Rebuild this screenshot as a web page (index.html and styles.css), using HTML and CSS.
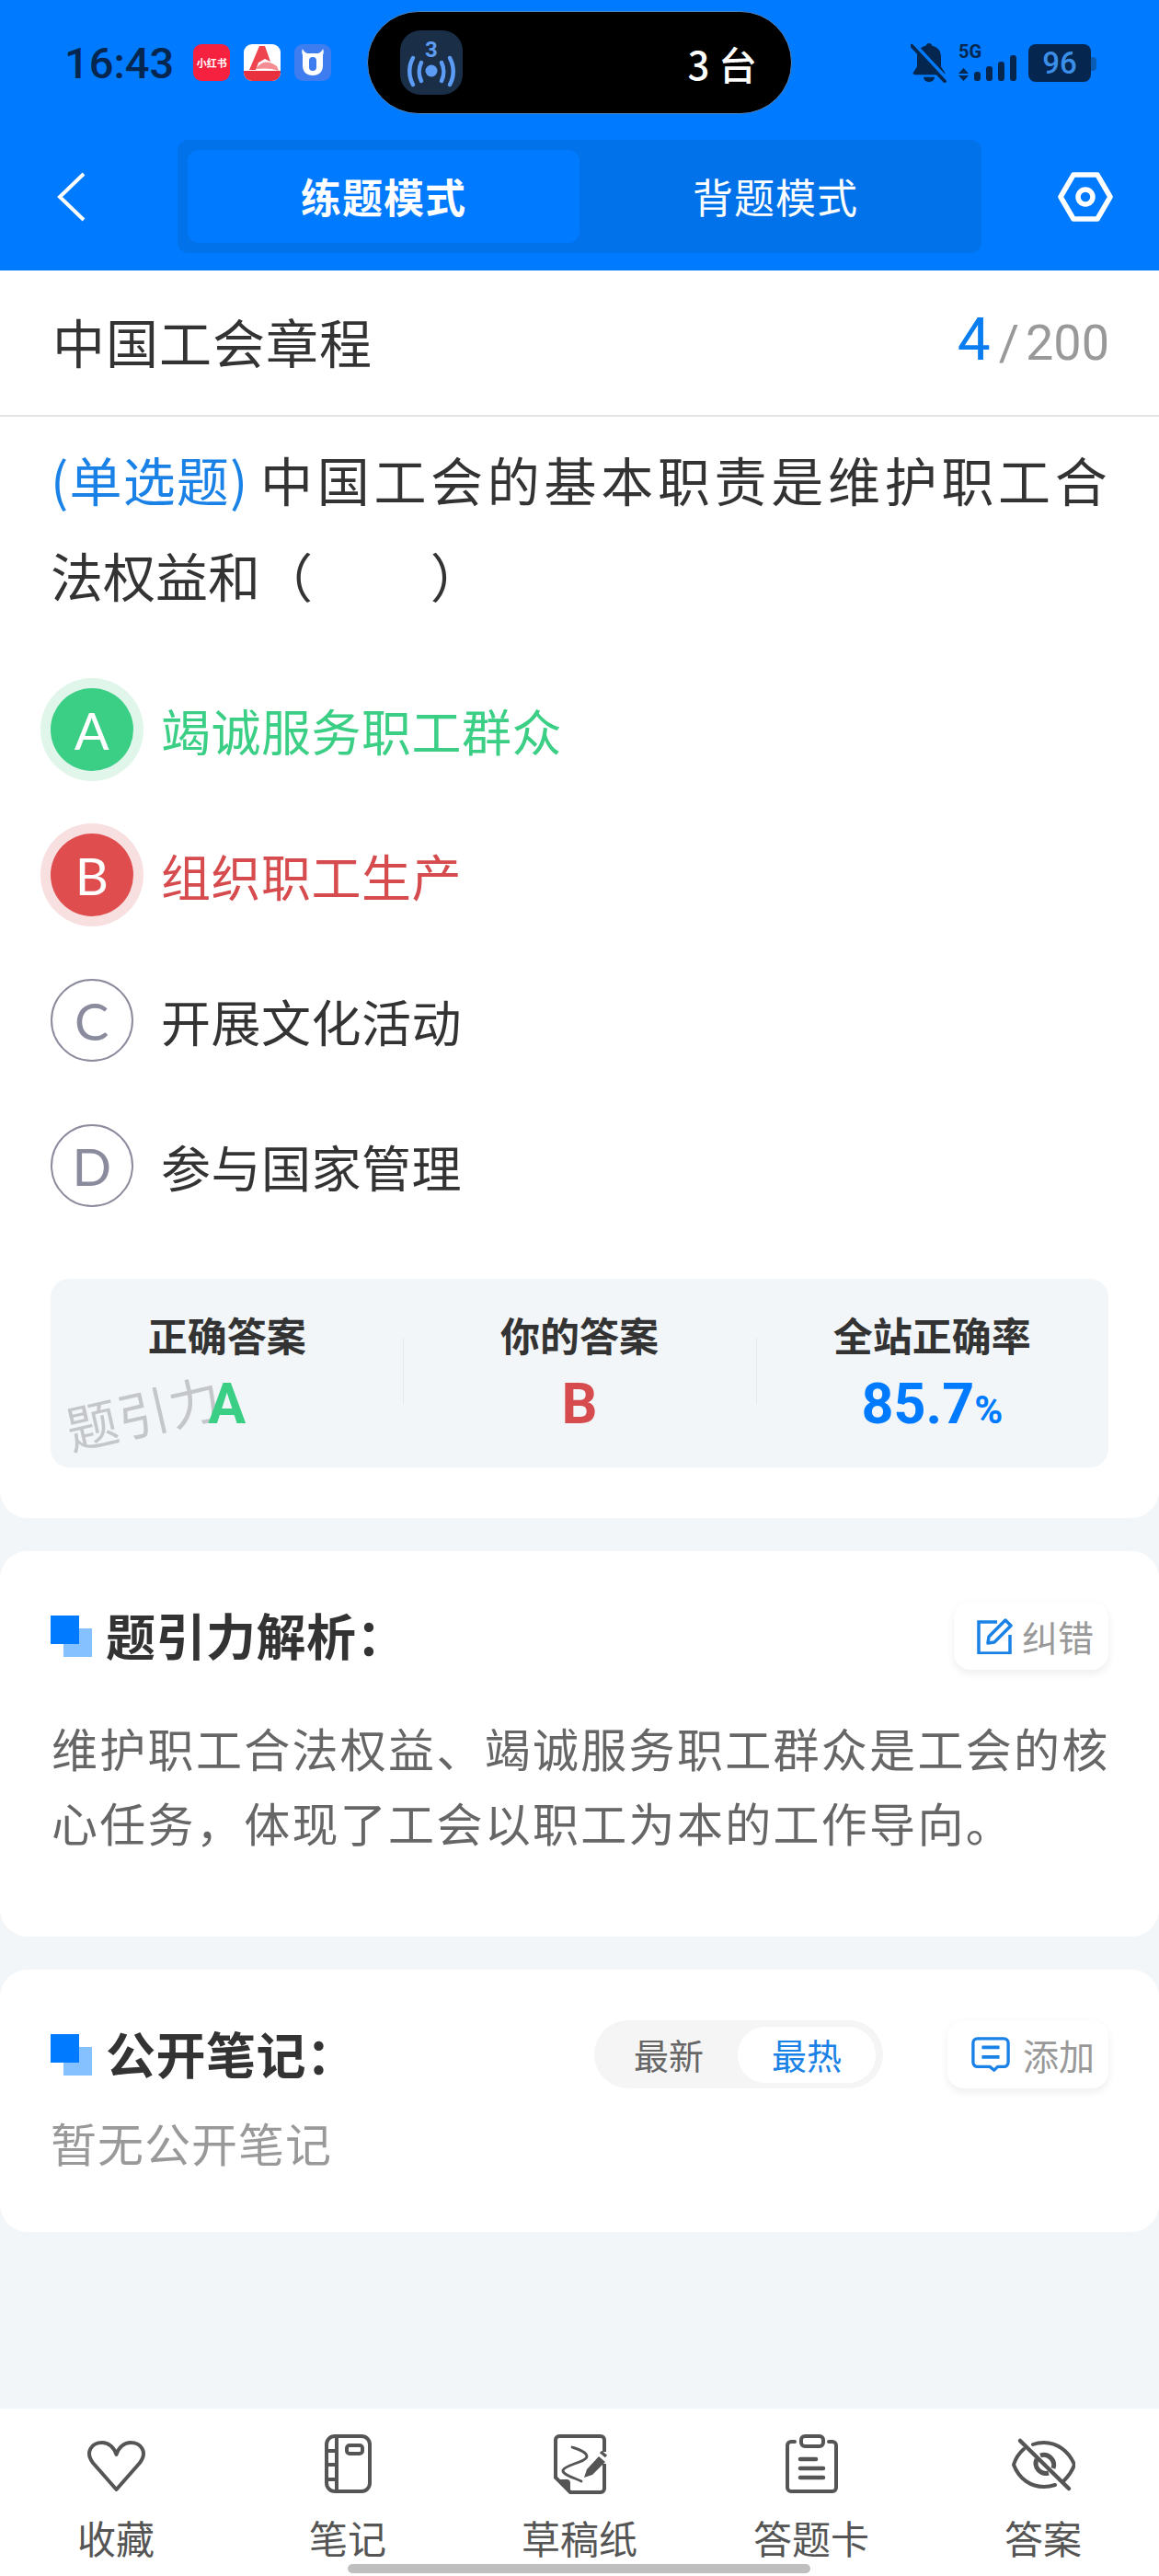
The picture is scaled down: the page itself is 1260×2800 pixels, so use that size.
FILE: index.html
```html
<!DOCTYPE html>
<html lang="zh-CN">
<head>
    <meta charset="UTF-8">
    <meta name="viewport" content="width=device-width, initial-scale=1.0">
    <title>练题模式</title>
    <link rel="stylesheet" href="styles.css">
</head>
<body>
    <header class="top">
        <div class="status">
            <div class="status-left">
                <span class="time">16:43</span>
                <span class="app app-red">小红书</span>
                <span class="app app-white">
                    <svg viewBox="0 0 40 40" width="40" height="40">
                        <rect width="40" height="40" fill="#fff"/>
                        <path d="M0 29h40v11H0z" fill="#e8303f"/>
                        <path d="M6 28 17 2h6l6 17-6-3-7 4-3 8z" fill="#ee4450"/>
                        <path d="M13 27c6-9 14-10 23-3l2 5c-8-3-16-3-25-2z" fill="#f58d92"/>
                    </svg>
                </span>
                <span class="app app-blue">
                    <svg viewBox="0 0 40 40" width="40" height="40">
                        <path d="M9 12c-1-3-1-5 0-7 1 3 3 4 5 5h12c2-1 4-2 5-5 1 2 1 4 0 7v11c0 7-4 11-11 11S9 30 9 23z" fill="#fff"/>
                        <rect x="16" y="14" width="8" height="15" rx="4" fill="#3d7df0"/>
                    </svg>
                </span>
            </div>
            <div class="island">
                <span class="island-icon">
                    <svg viewBox="0 0 68 70" width="68" height="70">
                        <text x="34" y="29" class="island-num">3</text>
                        <circle cx="34" cy="44" r="6.500" fill="#5c9cf5"/>
                        <g fill="none" stroke="#5c9cf5" stroke-width="4.500" stroke-linecap="round">
                            <path d="M23 35c-3 6-3 14 0 20M45 35c3 6 3 14 0 20"/>
                            <path d="M14 30c-5 9-5 20 0 29M54 30c5 9 5 20 0 29"/>
                        </g>
                    </svg>
                </span>
                <span class="island-text">3 台</span>
            </div>
            <div class="status-right">
                <svg viewBox="0 0 40 50" width="40" height="44" preserveAspectRatio="none">
                    <path d="M20 1c2 0 3 1 3 3 7 2 10 7 10 14v12l4 7c1 2 0 3-2 3H5c-2 0-3-1-2-3l4-7V18c0-7 3-12 10-14 0-2 1-3 3-3z" fill="#04264f"/>
                    <path d="M14 43h12a6 6 0 0 1-12 0z" fill="#04264f"/>
                    <path d="M3 3 39 47" stroke="#007aff" stroke-width="7"/>
                    <path d="M1 4 37 48" stroke="#04264f" stroke-width="4" stroke-linecap="round"/>
                </svg>
                <div class="signal">
                    <span class="net">5G</span>
                    <svg viewBox="0 0 64 44" width="64" height="44">
                        <path d="M0 34 5.500 28 11 34zM0 36 5.500 42 11 36z" fill="#04264f"/>
                        <rect x="17" y="32" width="7" height="10" rx="3" fill="#04264f"/>
                        <rect x="30" y="26" width="7" height="16" rx="3" fill="#04264f"/>
                        <rect x="43" y="21" width="7" height="21" rx="3" fill="#04264f"/>
                        <rect x="56" y="14" width="7" height="28" rx="3" fill="#04264f"/>
                    </svg>
                </div>
                <span class="battery">96</span>
            </div>
        </div>
        <div class="nav">
            <svg class="back" viewBox="0 0 32 54" width="32" height="54">
                <path d="M30 2 4 27l26 25" fill="none" stroke="#fff" stroke-width="4"/>
            </svg>
            <div class="mode">
                <span class="mode-item mode-on">练题模式</span>
                <span class="mode-item">背题模式</span>
            </div>
            <svg class="gear" viewBox="0 0 60 54" width="60" height="54">
                <path d="M17 3h26l14 24-14 24H17L3 27z" fill="none" stroke="#fff" stroke-width="5.500" stroke-linejoin="round"/>
                <circle cx="30" cy="27" r="8" fill="none" stroke="#fff" stroke-width="5.500"/>
            </svg>
        </div>
    </header>

    <section class="card card-main">
        <div class="paper">
            <span class="paper-name">中国工会章程</span>
            <span class="paper-count"><b>4</b><i>/</i>200</span>
        </div>
        <p class="question"><span class="qtype">(单选题)</span> 中国工会的基本职责是维护职工合<br>法权益和（&nbsp;&nbsp;&nbsp;&nbsp;&nbsp;&nbsp;&nbsp;&nbsp;&nbsp;&nbsp;）</p>
        <ul class="options">
            <li class="option option-right"><span class="letter">A</span>竭诚服务职工群众</li>
            <li class="option option-wrong"><span class="letter">B</span>组织职工生产</li>
            <li class="option"><span class="letter">C</span>开展文化活动</li>
            <li class="option"><span class="letter">D</span>参与国家管理</li>
        </ul>
        <div class="result">
            <span class="watermark">题引力</span>
            <div class="result-col">
                <span class="result-label">正确答案</span>
                <span class="result-val green">A</span>
            </div>
            <div class="result-col">
                <span class="result-label">你的答案</span>
                <span class="result-val red">B</span>
            </div>
            <div class="result-col">
                <span class="result-label">全站正确率</span>
                <span class="result-val blue">85.7<small>%</small></span>
            </div>
        </div>
    </section>

    <section class="card card-analysis">
        <div class="card-head">
            <span class="squares"></span>
            <h2>题引力解析：</h2>
            <span class="tool">
                <svg viewBox="0 0 40 40" width="40" height="40">
                    <path d="M22 5H2v34h34V19" fill="none" stroke="#1a82e6" stroke-width="3.500"/>
                    <path d="M13 21 31 3l6 6-18 18-7 1z" fill="none" stroke="#1a82e6" stroke-width="3.500" stroke-linejoin="round"/>
                </svg>
                纠错
            </span>
        </div>
        <p class="analysis">维护职工合法权益、竭诚服务职工群众是工会的核心任务，体现了工会以职工为本的工作导向。</p>
    </section>

    <section class="card card-notes">
        <div class="card-head">
            <span class="squares"></span>
            <h2>公开笔记：</h2>
            <div class="sort">
                <span class="sort-item">最新</span>
                <span class="sort-item sort-on">最热</span>
            </div>
            <span class="tool tool-add">
                <svg viewBox="0 0 44 40" width="42" height="40">
                    <path d="M7 2h30a5 5 0 0 1 5 5v22a5 5 0 0 1-5 5H30l-4 4-5-4H7a5 5 0 0 1-5-5V7a5 5 0 0 1 5-5z" fill="none" stroke="#1a82e6" stroke-width="3.500" stroke-linejoin="round"/>
                    <path d="M12 12h20M12 23h20" stroke="#1a82e6" stroke-width="4"/>
                </svg>
                添加
            </span>
        </div>
        <p class="empty">暂无公开笔记</p>
    </section>

    <nav class="tabbar">
        <div class="tab">
            <svg viewBox="0 0 66 66" width="66" height="66">
                <path d="M33.500 61 8 32C-1 20 7 10 18 10c7 0 13 5 15.500 13C36 15 42 10 49 10c11 0 19 10 10 22z" fill="none" stroke="#555" stroke-width="4" stroke-linejoin="round"/>
            </svg>
            收藏
        </div>
        <div class="tab">
            <svg viewBox="0 0 66 66" width="66" height="66">
                <rect x="10" y="3" width="47" height="60" rx="9" fill="none" stroke="#555" stroke-width="4"/>
                <path d="M21 3v60M10 19h11M10 34h11M10 50h11" fill="none" stroke="#555" stroke-width="4"/>
                <rect x="32" y="13" width="17" height="9" rx="3" fill="none" stroke="#555" stroke-width="4"/>
            </svg>
            笔记
        </div>
        <div class="tab">
            <svg viewBox="0 0 66 66" width="66" height="66">
                <path d="M60 20V7a4 4 0 0 0-4-4H11a4 4 0 0 0-4 4v41l16 16h33a4 4 0 0 0 4-4V33" fill="none" stroke="#555" stroke-width="4"/>
                <path d="M8 50h11q4 0 4 4v9z" fill="#555"/>
                <path d="M25 15c6 2 16 5 16 10 0 6-24 9-26 15-1 5 12 8 20 12" fill="none" stroke="#555" stroke-width="2.800" stroke-linecap="round"/>
                <path d="M38 48l3-9 13-14 7 6-14 14z" fill="#555"/>
                <path d="M56 20l6 5" stroke="#555" stroke-width="3.500"/>
            </svg>
            草稿纸
        </div>
        <div class="tab">
            <svg viewBox="0 0 66 66" width="66" height="66">
                <path d="M15 9H11a4 4 0 0 0-4 4v46a4 4 0 0 0 4 4h45a4 4 0 0 0 4-4V13a4 4 0 0 0-4-4h-4" fill="none" stroke="#555" stroke-width="4" stroke-linecap="round"/>
                <rect x="22" y="3" width="24" height="11" rx="4" fill="none" stroke="#555" stroke-width="4"/>
                <path d="M21 28h17M21 38h25M21 48h25" stroke="#555" stroke-width="4.500" stroke-linecap="round"/>
            </svg>
            答题卡
        </div>
        <div class="tab">
            <svg viewBox="0 0 70 66" width="70" height="66">
                <path d="M14 17Q6 24 3 34c6 16 19 24 33 24 4 0 8-.7 12-2M24 12c4-1.500 8-2 12-2 14 0 27 9 33 24-2 6-6 12-11 17" fill="none" stroke="#555" stroke-width="4" stroke-linecap="round"/>
                <path d="M10 8 63 60" stroke="#555" stroke-width="4.500" stroke-linecap="round"/>
                <path d="M28 28a11 11 0 0 0 13 15M32 24a11 11 0 0 1 14 14" fill="none" stroke="#555" stroke-width="5"/>
            </svg>
            答案
        </div>
        <span class="home-bar"></span>
    </nav>
</body>
</html>
```

FILE: styles.css
```css
* {
    box-sizing: border-box;
}
body {
    margin: 0;
    height: 2800px;
    position: relative;
    overflow: hidden;
    background-color: #f2f6f9;
    font-family: "Noto Sans CJK SC", "Noto Sans", sans-serif;
    color: #333;
}

/* header */
.top {
    height: 294px;
    background-color: #007aff;
}
.status {
    height: 124px;
    padding: 12px 0 0 70px;
    display: flex;
    align-items: flex-start;
}
.status-left {
    width: 329px;
    height: 112px;
    display: flex;
    align-items: center;
    gap: 15px;
    font-family: Roboto, sans-serif;
}
.time {
    font-size: 47px;
    font-weight: 500;
    color: #04264f;
    margin-right: 6px;
}
.app {
    width: 40px;
    height: 40px;
    border-radius: 9px;
    overflow: hidden;
    display: flex;
    align-items: center;
    justify-content: center;
}
.app-red {
    background-color: #f5213f;
    color: #fff;
    font-size: 11px;
    font-weight: 700;
    font-family: "Noto Sans CJK SC", sans-serif;
    white-space: nowrap;
}
.app-blue {
    background-color: #3d7df0;
}
.island {
    width: 462px;
    height: 112px;
    background-color: #000;
    border-radius: 56px;
    display: flex;
    align-items: center;
    justify-content: space-between;
    padding: 0 37px 0 35px;
    border: 1px solid #4b85c4;
}
.island-icon {
    width: 68px;
    height: 70px;
    border-radius: 22px;
    background-color: #1a2e47;
}
.island-num {
    fill: #5c9cf5;
    font-size: 24px;
    font-weight: 700;
    text-anchor: middle;
    font-family: Roboto, sans-serif;
}
.island-text {
    color: #fff;
    font-size: 42px;
    font-weight: 500;
}
.status-right {
    margin-left: 129px;
    height: 112px;
    display: flex;
    align-items: center;
    gap: 12px;
}
.signal {
    position: relative;
    width: 64px;
    height: 44px;
}
.net {
    position: absolute;
    left: 0;
    top: 0;
    font-family: Roboto, sans-serif;
    font-size: 20px;
    font-weight: 700;
    line-height: 20px;
    color: #04264f;
}
.battery {
    position: relative;
    width: 68px;
    height: 41px;
    border-radius: 8px;
    background-color: #04264f;
    color: #3c8fe8;
    font-family: Roboto, sans-serif;
    font-size: 33px;
    font-weight: 500;
    line-height: 41px;
    text-align: center;
}
.battery::after {
    content: "";
    position: absolute;
    right: -6px;
    top: 14px;
    width: 6px;
    height: 15px;
    border-radius: 0 4px 4px 0;
    background-color: #0a5db5;
}
.nav {
    height: 123px;
    margin-top: 28px;
    display: flex;
    align-items: center;
    padding: 0 0 0 61px;
}
.mode {
    width: 874px;
    height: 123px;
    margin: 0 0 0 100px;
    padding: 11px 11px;
    border-radius: 12px;
    background-color: #0172e9;
    display: flex;
}
.mode-item {
    flex: 1;
    border-radius: 12px;
    color: #fff;
    font-size: 44px;
    line-height: 100px;
    text-align: center;
    letter-spacing: 1px;
}
.mode-on {
    background-color: #007aff;
    font-weight: 700;
}
.gear {
    margin-left: 83px;
}

/* question card */
.card {
    background-color: #fff;
    border-radius: 30px;
}
.card-main {
    height: 1356px;
    padding: 0 55px;
    border-radius: 0 0 30px 30px;
    margin-bottom: 36px;
}
.paper {
    height: 159px;
    margin: 0 -55px;
    padding: 0 54px 6px 57px;
    display: flex;
    align-items: center;
    justify-content: space-between;
    border-bottom: 2px solid #e4e4e4;
}
.paper-name {
    font-size: 57px;
    letter-spacing: 1px;
}
.paper-count {
    font-family: Roboto, sans-serif;
    font-size: 54px;
    color: #999;
}
.paper-count b {
    font-weight: 400;
    font-size: 64px;
    color: #0a7ef0;
}
.paper-count i {
    font-style: normal;
    margin: 0 7px 0 9px;
}
.question {
    margin: 0;
    padding: 15px 0 0 0;
    font-size: 57px;
    line-height: 104px;
    height: 261px;
    white-space: nowrap;
}
.question::first-line {
    letter-spacing: 4.700px;
}
.qtype {
    color: #1a82e6;
    letter-spacing: 1.200px;
    margin-right: -5px;
}
.options {
    list-style: none;
    margin: 0;
    padding: 0;
}
.option {
    height: 158px;
    display: flex;
    align-items: center;
    gap: 30px;
    font-size: 54px;
    letter-spacing: 0.5px;
}
.letter {
    width: 90px;
    height: 90px;
    border-radius: 50%;
    border: 2px solid #8b8b9e;
    color: #8b8b9e;
    font-family: Lato, sans-serif;
    font-size: 56px;
    display: flex;
    align-items: center;
    justify-content: center;
}
.option-right {
    color: #3bce85;
}
.option-right .letter {
    background-color: #3bce85;
    border: 0;
    color: #fff;
    box-shadow: 0 0 0 11px #e0f6ea;
}
.option-wrong {
    color: #d64b4d;
}
.option-wrong .letter {
    background-color: #e04d4f;
    border: 0;
    color: #fff;
    box-shadow: 0 0 0 11px #f9e0e0;
}
.result {
    position: relative;
    height: 205px;
    margin-top: 44px;
    border-radius: 20px;
    background-color: #f2f6f9;
    display: flex;
}
.result-col {
    flex: 1;
    display: flex;
    flex-direction: column;
    align-items: center;
    padding-top: 32px;
    position: relative;
}
.result-col + .result-col::before {
    content: "";
    position: absolute;
    left: 0;
    top: 64px;
    height: 72px;
    width: 1px;
    background-color: #e6e9ec;
}
.result-label {
    font-size: 43px;
    font-weight: 700;
    line-height: 56px;
}
.result-val {
    font-family: Roboto, sans-serif;
    font-size: 61px;
    font-weight: 700;
    line-height: 66px;
    margin-top: 15px;
}
.result-val small {
    font-size: 42px;
}
.green {
    color: #3bce85;
}
.red {
    color: #d64b4d;
}
.blue {
    color: #007aff;
}
.watermark {
    position: absolute;
    left: 15px;
    top: 103px;
    font-size: 56px;
    color: #c4c6c9;
    transform: rotate(-13deg);
    letter-spacing: 1px;
}

/* analysis + notes */
.card-analysis {
    height: 419px;
    margin-bottom: 36px;
    padding: 55px 45px 0 55px;
}
.card-analysis .tool {
    margin-right: 10px;
}
.card-notes {
    height: 285px;
    padding: 55px 55px 0;
}
.card-head {
    height: 74px;
    display: flex;
    align-items: center;
}
.squares {
    width: 45px;
    height: 45px;
    position: relative;
    margin-right: 15px;
    flex-shrink: 0;
}
.squares::before,
.squares::after {
    content: "";
    position: absolute;
    width: 31px;
    height: 31px;
}
.squares::before {
    right: 0;
    bottom: 0;
    background-color: #85c1ff;
}
.squares::after {
    left: 0;
    top: 0;
    background-color: #007aff;
}
h2 {
    margin: -4px 0 0;
    font-size: 54px;
    font-weight: 700;
    letter-spacing: 0.5px;
    flex: 1;
}
.tool {
    height: 74px;
    padding: 0 16px 0 25px;
    border-radius: 18px;
    background-color: #fff;
    box-shadow: 0 4px 10px rgba(0, 0, 0, 0.07);
    display: flex;
    align-items: center;
    gap: 9px;
    font-size: 39px;
    color: #999;
}
.tool-add {
    padding: 0 15px 0 26px;
    gap: 14px;
}
.analysis {
    margin: 44px 0 0;
    padding-left: 1px;
    font-size: 50px;
    line-height: 81px;
    letter-spacing: 2.300px;
    color: #666;
}
.sort {
    width: 314px;
    height: 74px;
    padding: 7px 8px 6px 6px;
    margin-right: 70px;
    border-radius: 37px;
    background-color: #f5f5f5;
    display: flex;
}
.sort-item {
    flex: 1;
    border-radius: 30px;
    font-size: 38px;
    line-height: 60px;
    text-align: center;
    color: #666;
}
.sort-on {
    background-color: #fff;
    color: #1a82e6;
}
.empty {
    margin: 22px 0 0;
    font-size: 50px;
    letter-spacing: 1px;
    color: #999;
}

/* bottom bar */
.tabbar {
    position: absolute;
    left: 0;
    bottom: 0;
    width: 1260px;
    height: 182px;
    padding-top: 27px;
    background-color: #fff;
    display: flex;
}
.tab {
    flex: 1;
    display: flex;
    flex-direction: column;
    align-items: center;
    font-size: 42px;
    line-height: 56px;
    color: #555;
}
.tab svg {
    margin-bottom: 19px;
}
.home-bar {
    position: absolute;
    left: 378px;
    bottom: 3px;
    width: 503px;
    height: 10px;
    border-radius: 5px;
    background-color: #bfbfbf;
}
```
